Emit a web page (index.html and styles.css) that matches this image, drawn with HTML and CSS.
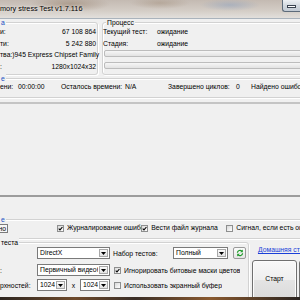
FILE: index.html
```html
<!DOCTYPE html>
<html lang="ru">
<head>
    <meta charset="UTF-8">
    <title>Memory stress Test v1.7.116</title>
    <link rel="stylesheet" href="styles.css">
</head>
<body>
    <div class="titlebar">
        <span class="title">mory stress Test v1.7.116</span>
        <div class="min-btn"><span></span></div>
    </div>

    <div class="client">
        <div class="top">
            <div class="group info">
                <span class="caption blue">а</span>
                <div class="kv"><span>и:</span><span>67 108 864</span></div>
                <div class="kv"><span>ти:</span><span>5 242 880</span></div>
                <div class="kv"><span>тва:)</span><span>945 Express Chipset Family</span></div>
                <div class="kv"><span>:</span><span>1280x1024x32</span></div>
            </div>
            <div class="group process">
                <span class="caption">Процесс</span>
                <div class="pr"><span class="pl">Текущий тест:</span><span>ожидание</span></div>
                <div class="pr"><span class="pl">Стадия:</span><span>ожидание</span></div>
                <div class="bar first"></div>
                <div class="bar"></div>
            </div>
        </div>

        <div class="group time">
            <span class="caption blue">е</span>
            <span class="t1">ени:</span>
            <span class="t2">00:00:00</span>
            <span class="t3">Осталось времени:</span>
            <span class="t4">N/A</span>
            <span class="t5">Завершено циклов:</span>
            <span class="t6">0</span>
            <span>Найдено ошибок: 0</span>
        </div>

        <div class="log"></div>

        <div class="group opts">
            <span class="caption blue">е</span>
            <span class="field">но</span>
            <span class="chk on first"><svg width="5" height="5" viewBox="0 0 7 7"><path d="M1 3.6 L2.8 5.4 L6.2 1.4" fill="none" stroke="#000" stroke-width="1.5"/></svg></span>
            <span class="chk-label w1">Журналирование ошибок</span>
            <span class="chk on"><svg width="5" height="5" viewBox="0 0 7 7"><path d="M1 3.6 L2.8 5.4 L6.2 1.4" fill="none" stroke="#000" stroke-width="1.5"/></svg></span>
            <span class="chk-label w2">Вести файл журнала</span>
            <span class="chk"></span>
            <span class="chk-label">Сигнал, если есть ошибки</span>
        </div>

        <div class="bottom">
            <div class="group test">
                <span class="caption">теста</span>
                <div class="trow">
                    <span class="lbl"></span>
                    <span class="combo wide"><span class="val">DirectX</span><span class="arrow"><svg width="5" height="3" viewBox="0 0 5 3"><path d="M0 0H5L2.5 3Z" fill="#000"/></svg></span></span>
                    <span class="lbl2">Набор тестов:</span>
                    <span class="combo set"><span class="val">Полный</span><span class="arrow"><svg width="5" height="3" viewBox="0 0 5 3"><path d="M0 0H5L2.5 3Z" fill="#000"/></svg></span></span>
                    <span class="refresh">
                        <svg width="8" height="8" viewBox="0 0 8 8">
                            <path d="M1.4 3.8 A2.6 2.6 0 0 1 5.9 2.2" fill="none" stroke="#1f9a2a" stroke-width="1.2"/>
                            <path d="M6.8 0.6 V3.2 H4.2 Z" fill="#1f9a2a"/>
                            <path d="M6.6 4.2 A2.6 2.6 0 0 1 2.1 5.8" fill="none" stroke="#1f9a2a" stroke-width="1.2"/>
                            <path d="M1.2 7.4 V4.8 H3.8 Z" fill="#1f9a2a"/>
                        </svg>
                    </span>
                </div>
                <div class="trow r2">
                    <span class="lbl">:</span>
                    <span class="combo wide"><span class="val">Первичный видеобуфер</span><span class="arrow"><svg width="5" height="3" viewBox="0 0 5 3"><path d="M0 0H5L2.5 3Z" fill="#000"/></svg></span></span>
                    <span class="chk on gap"><svg width="5" height="5" viewBox="0 0 7 7"><path d="M1 3.6 L2.8 5.4 L6.2 1.4" fill="none" stroke="#000" stroke-width="1.5"/></svg></span>
                    <span class="chk-label">Игнорировать битовые маски цветов</span>
                </div>
                <div class="trow r3">
                    <span class="lbl">рхностей:</span>
                    <span class="combo small"><span class="val">1024</span><span class="arrow"><svg width="5" height="3" viewBox="0 0 5 3"><path d="M0 0H5L2.5 3Z" fill="#000"/></svg></span></span>
                    <span class="times">x</span>
                    <span class="combo small"><span class="val">1024</span><span class="arrow"><svg width="5" height="3" viewBox="0 0 5 3"><path d="M0 0H5L2.5 3Z" fill="#000"/></svg></span></span>
                    <span class="chk gap"></span>
                    <span class="chk-label">Использовать экранный буфер</span>
                </div>
            </div>
            <div class="side">
                <a class="home-link" href="#">Домашняя страница</a>
                <div class="btn-row">
                    <span class="btn start">Старт</span>
                    <span class="btn">Выход</span>
                </div>
            </div>
        </div>
    </div>
    <div class="frame-bottom"></div>
</body>
</html>
```

FILE: styles.css
```css
* {
    box-sizing: border-box;
}

body {
    margin: 0;
    width: 300px;
    height: 300px;
    overflow: hidden;
    background-color: #f0f0f0;
    font-family: "Liberation Sans", Arial, sans-serif;
    font-size: 6.8px;
    color: #000;
}

/* aero title bar */
.titlebar {
    height: 19px;
    display: flex;
    justify-content: space-between;
    align-items: flex-start;
    border-bottom: 1px solid #aab3bc;
    background:
        radial-gradient(ellipse 40px 8px at 70px 4px, rgba(150, 128, 108, 0.55), transparent),
        radial-gradient(ellipse 30px 6px at 230px 5px, rgba(140, 160, 190, 0.5), transparent),
        radial-gradient(ellipse 30px 6px at 160px 3px, rgba(160, 140, 120, 0.45), transparent),
        linear-gradient(#c4bab2, #d4cdc6 60%, #e2dfdc);
}

.title {
    padding-top: 4px;
    font-size: 7.3px;
    line-height: 9px;
    white-space: nowrap;
    text-shadow: 0 0 3px #fff;
}

.min-btn {
    width: 18px;
    height: 12px;
    border: 1px solid #5d6b7a;
    border-top: none;
    border-right: none;
    border-radius: 0 0 0 3px;
    background: linear-gradient(#eef1f4, #d3d9e0 50%, #c2cad3);
    padding: 5px 0 0 4px;
}

.min-btn span {
    display: block;
    width: 9px;
    height: 3px;
    background-color: #fff;
    border: 1px solid #3a4350;
}

.client {
    height: 278px;
    overflow: hidden;
}

.frame-bottom {
    height: 3px;
    background: linear-gradient(90deg, #2e2620, #6e4a2c 25%, #3a2e26 45%, #8a5a30 70%, #2a2420);
}

/* group boxes */
.group {
    position: relative;
    border: 1px solid #d2d2d2;
    border-radius: 3px;
    box-shadow: inset 1px 1px 0 #fff, 1px 1px 0 #fff;
}

.caption {
    position: absolute;
    top: -5px;
    left: 4px;
    padding: 0 1px;
    line-height: 9px;
    background-color: #f0f0f0;
    white-space: nowrap;
}

.caption.blue {
    color: #1b4fc4;
}

.top {
    display: flex;
    height: 56px;
    padding-top: 3px;
}

.info {
    margin-left: -5px;
    width: 103px;
    padding: 3px 1px 0 4px;
}

.kv {
    display: flex;
    justify-content: space-between;
    height: 11.7px;
    line-height: 11.7px;
    white-space: nowrap;
}

.process {
    flex: none;
    width: 230px;
    margin-left: 4px;
    padding-top: 3px;
}

.process .caption {
    left: 3px;
}

.pr {
    display: flex;
    height: 11.7px;
    line-height: 11.7px;
    white-space: nowrap;
}

.pl {
    width: 54px;
}

.bar {
    margin: 5px 0 0 1px;
    height: 7px;
    border: 1px solid #bcbcbc;
    border-radius: 2px;
    background: linear-gradient(#f6f6f6, #e2e2e2);
}

.bar.first {
    margin-top: 1px;
}

.time {
    display: flex;
    width: 320px;
    height: 20px;
    margin: 3px 0 0 -5px;
    padding: 2px 0 0 4px;
    line-height: 11px;
    white-space: nowrap;
}

.t1 { width: 18px; }
.t2 { width: 43px; }
.t3 { width: 64px; }
.t4 { width: 43px; }
.t5 { width: 68px; }
.t6 { width: 15px; }

.log {
    height: 95px;
    margin-top: 4px;
    border-top: 2px solid #c4c4c4;
    border-bottom: 2px solid #9c9c9c;
}

/* options row */
.opts {
    display: flex;
    align-items: flex-start;
    width: 320px;
    height: 20px;
    margin: 22px 0 0 -5px;
    padding: 4px 0 0 4px;
    line-height: 8px;
    white-space: nowrap;
}

.field {
    width: 20px;
    height: 9px;
    margin-left: -11px;
    padding-right: 1px;
    border: 1px solid #7c7c7c;
    background-color: #f7f7f7;
    text-align: right;
    line-height: 7px;
}

.chk {
    flex: none;
    display: flex;
    align-items: center;
    justify-content: center;
    width: 7px;
    height: 7px;
    margin-top: 1px;
    border: 1px solid #8e8f8f;
    background: linear-gradient(135deg, #d8d8d8, #fff);
}

.chk.first {
    margin-left: 49px;
}

.chk-label {
    margin-left: 3px;
    overflow: hidden;
    white-space: nowrap;
}

.w1 { width: 79px; }
.w2 { width: 80px; }

/* test settings */
.bottom {
    display: flex;
    margin-top: 3px;
}

.test {
    flex: none;
    width: 254px;
    height: 70px;
    margin-left: -5px;
    padding: 4px 0 0 4px;
}

.trow {
    display: flex;
    align-items: center;
    height: 12px;
    white-space: nowrap;
}

.trow.r2 {
    margin-top: 5px;
}

.trow.r3 {
    margin-top: 3px;
}

.lbl {
    flex: none;
    width: 37px;
}

.lbl2 {
    flex: none;
    width: 60px;
    margin-left: 3px;
}

.combo {
    flex: none;
    display: flex;
    height: 12px;
    border: 1px solid #7a7a7a;
    background-color: #fff;
}

.combo.wide { width: 73px; }
.combo.set { width: 55px; }
.combo.small { width: 30px; }

.val {
    flex: 1;
    padding-left: 2px;
    line-height: 10px;
    overflow: hidden;
}

.arrow {
    flex: none;
    display: flex;
    align-items: center;
    justify-content: center;
    width: 9px;
    margin: 1px;
    border: 1px solid #a8a8a8;
    background: linear-gradient(#fafafa, #e4e4e4);
}

.times {
    width: 13px;
    text-align: center;
}

.chk.gap {
    margin: 0 0 0 4px;
}

.refresh {
    display: flex;
    align-items: center;
    justify-content: center;
    width: 13px;
    height: 12px;
    margin-left: 5px;
    border: 1px solid #9a9a9a;
    border-radius: 2px;
    background: linear-gradient(#fbfbfb, #e6e6e6);
}

.side {
    flex: 1;
    padding-left: 3px;
}

.home-link {
    display: block;
    margin: 4px 0 0 6px;
    line-height: 8px;
    color: #1a3fd8;
    white-space: nowrap;
}

.btn-row {
    display: flex;
    gap: 2px;
    margin-top: 6px;
}

.btn {
    flex: none;
    display: flex;
    align-items: center;
    justify-content: center;
    width: 45px;
    height: 40px;
    padding-bottom: 3px;
    border: 1px solid #707070;
    border-radius: 3px;
    background: linear-gradient(#f8f8f8, #efefef 50%, #e4e4e4 51%, #dadada);
    box-shadow: inset 0 0 0 1px #fcfcfc;
}
```
